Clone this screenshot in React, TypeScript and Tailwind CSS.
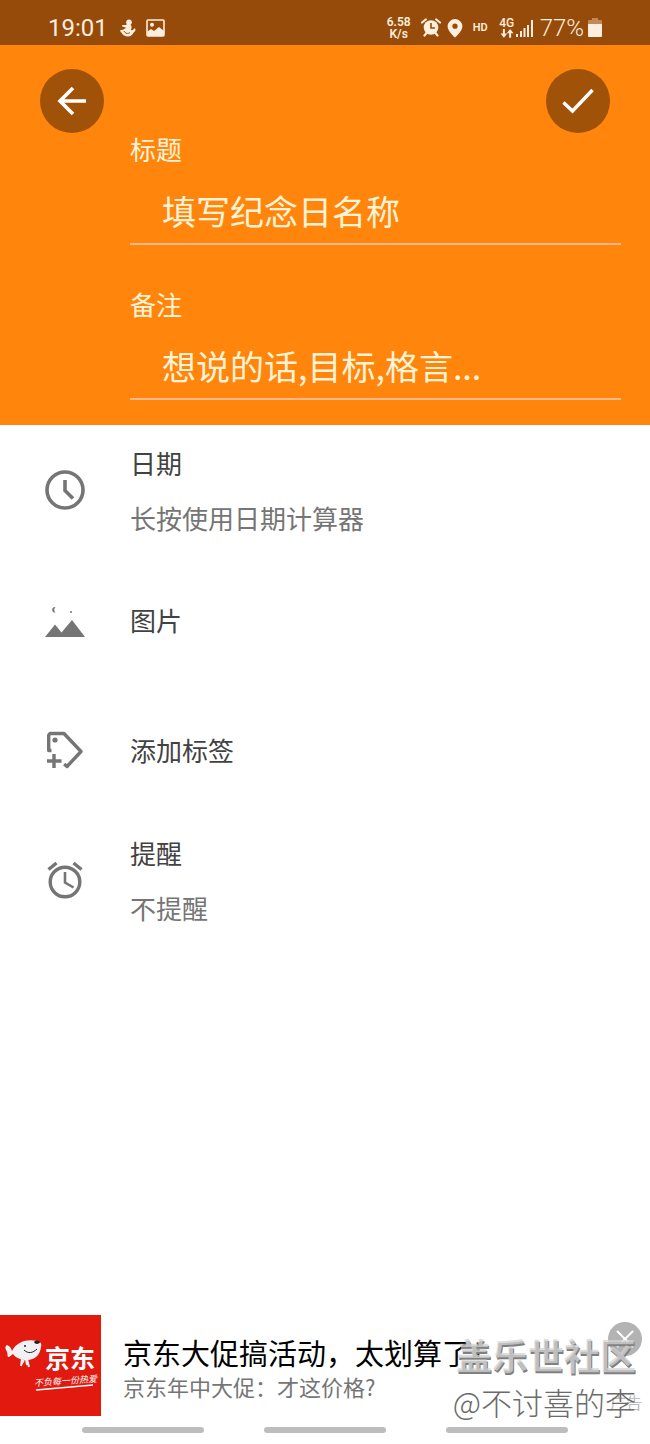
import type { ReactNode } from "react";

function BunnyIcon() {
  return (
    <svg viewBox="0 0 16 18" className="h-[18px] w-4 fill-[#fdeedd]">
      <circle cx="9" cy="3.2" r="2.800" />
      <path d="M7 5c3.500 0 5 1.500 4.500 4l-.6 2c1.400.4 2.100.1 2.800-1 .6-.9 2.100-.3 1.800.8-.4 1.600-1 2.200-1.800 2.800-1.400 2.600-3.200 4-5.700 4-3 0-5.300-1.300-6.600-4C.8 13 0 12.300.2 11.500c.3-.8 1.600-.2 2.600-.7C4 10.300 5.500 9.500 6 8.800L2.500 7.600c-.9-.5-.5-1.700.5-1.600L6 6z" />
      <path d="M4 12c1 2.500 4 3.200 6 1.500" fill="none" stroke="#964b0a" strokeWidth="1" />
    </svg>
  );
}

function PictureIcon() {
  return (
    <svg viewBox="0 0 20 18" className="h-[18px] w-5">
      <rect x="1" y="1" width="17" height="16" rx="1" fill="none" stroke="#fdeedd" strokeWidth="1.600" />
      <circle cx="6" cy="5.800" r="2" fill="#fdeedd" />
      <path d="M1.500 12.500 5 10l3 2 5-4 5 4v5H1.500z" fill="#fdeedd" />
    </svg>
  );
}

function StatusAlarmIcon() {
  return (
    <svg viewBox="0 0 20 19" className="h-[19px] w-5">
      <circle cx="10" cy="9.500" r="7.300" fill="#fdeedd" />
      <path d="M1 4.500 4.800 1.500M19 4.500 15.200 1.500M3.500 17.500l2-2.500M16.500 17.500l-2-2.500" stroke="#fdeedd" strokeWidth="2.200" strokeLinecap="round" />
      <path d="M10 5v5h4" fill="none" stroke="#964b0a" strokeWidth="1.600" />
    </svg>
  );
}

function PinIcon() {
  return (
    <svg viewBox="0 0 16 20" className="h-5 w-4">
      <path d="M8 1a7.400 7.400 0 0 0-7.400 7.400C.6 13 8 19.500 8 19.500S15.400 13 15.400 8.400A7.400 7.400 0 0 0 8 1zm0 4.600a2.600 2.600 0 1 1 0 5.200 2.600 2.600 0 0 1 0-5.200z" fill="#fdeedd" />
    </svg>
  );
}

function ArrowsIcon() {
  return (
    <svg viewBox="0 0 14 9" className="h-[9px] w-3.5 fill-[#fdeedd]">
      <path d="M2.900 0h2v4.500h2.400L3.900 8.800.5 4.500h2.400zM9.100 8.800h2V4.300h2.400L10.100 0 6.700 4.300h2.400z" />
    </svg>
  );
}

function SignalIcon() {
  return (
    <svg viewBox="0 0 18 18" className="size-[18px] fill-[#fdeedd]">
      <rect x="0" y="15" width="2" height="3" />
      <rect x="4" y="12" width="2" height="6" />
      <rect x="7.500" y="9" width="2" height="9" />
      <rect x="11" y="6" width="2" height="12" />
      <rect x="15" y="1" width="2" height="17" />
    </svg>
  );
}

function BatteryIcon() {
  return (
    <svg viewBox="0 0 14 19" className="h-[19px] w-3.5">
      <path d="M4 0h6v2h3a1 1 0 0 1 1 1v3H0V3a1 1 0 0 1 1-1h3z" fill="#c08a5a" />
      <path d="M0 6h14v12a1 1 0 0 1-1 1H1a1 1 0 0 1-1-1z" fill="#fdeedd" />
    </svg>
  );
}

function StatusBar() {
  return (
    <div className="flex h-[45px] items-center justify-between bg-[#964b0a] px-12 pt-2.5 font-[Roboto,sans-serif] text-[#fdeedd]">
      <div className="flex items-center gap-2.5">
        <span className="pr-0.5 text-2xl leading-6">19:01</span>
        <BunnyIcon />
        <PictureIcon />
      </div>
      <div className="flex items-center gap-1.5">
        <div className="pr-1 text-center text-xs leading-3 font-semibold">
          6.58
          <br />
          K/s
        </div>
        <StatusAlarmIcon />
        <PinIcon />
        <span className="px-1 text-[11px] leading-4 font-semibold">HD</span>
        <div className="flex items-center">
          <div className="flex w-[18px] flex-col items-center text-xs leading-[11px] font-medium">
            4G
            <ArrowsIcon />
          </div>
          <SignalIcon />
        </div>
        <div className="flex items-center gap-1">
          <span className="text-2xl leading-6 font-light">77%</span>
          <BatteryIcon />
        </div>
      </div>
    </div>
  );
}

function Field({ id, label, placeholder }: { id: string; label: string; placeholder: string }) {
  return (
    <div className="flex flex-col">
      <label htmlFor={id} className="text-[26px] leading-8 text-[#fff3d6]">
        {label}
      </label>
      <input
        id={id}
        placeholder={placeholder}
        className="h-20 w-full border-b-2 border-[#ffb98a] bg-transparent pt-3 pl-8 text-[34px] text-[#fff3d6] outline-none placeholder:text-[#fff3d6]"
      />
    </div>
  );
}

function ClockIcon() {
  return (
    <svg viewBox="0 0 40 40" className="size-10" fill="none" stroke="#757575" strokeWidth="3.600">
      <circle cx="20" cy="20" r="18" />
      <path d="M20 10v10.500l8 8" />
    </svg>
  );
}

function MountainIcon() {
  return (
    <svg viewBox="0 0 40 40" className="size-10 fill-[#757575]">
      <path d="M0 37 10 24.500l6.500 8L27 20l13 17z" />
      <path d="M10.500 7a2.800 2.800 0 1 0 0 5.500 4 4 0 0 1 0-5.500z" />
      <circle cx="26" cy="12" r="1" />
    </svg>
  );
}

function TagPlusIcon() {
  return (
    <svg viewBox="0 0 40 40" className="size-10" fill="none" stroke="#757575" strokeWidth="3.400">
      <path d="M6.500 20.500H3.700V5.500a2 2 0 0 1 2-2H19L36 21.500 22 36.500l-2.800-2.500" strokeLinejoin="round" />
      <circle cx="10" cy="10" r="2.600" fill="#757575" stroke="none" />
      <path d="M9 24v14M2 31h14.500" />
    </svg>
  );
}

function AlarmIcon() {
  return (
    <svg viewBox="0 0 40 40" className="size-10" fill="none" stroke="#757575" strokeWidth="3.400">
      <circle cx="20" cy="22" r="14.800" />
      <path d="M3.500 9.500 11.500 3M36.500 9.500 28.500 3" />
      <path d="M20 12v10.500l8.500 5" strokeWidth="2.600" />
    </svg>
  );
}

function Row({ icon, title, note }: { icon: ReactNode; title: string; note?: string }) {
  return (
    <button type="button" className="flex h-[130px] w-full items-center gap-[45px] pl-[45px] text-left">
      {icon}
      <span className="flex flex-col gap-[15px] text-[26px] leading-10">
        <span className="text-[#424242]">{title}</span>
        {note && <span className="text-[#757575]">{note}</span>}
      </span>
    </button>
  );
}

function AdLogo() {
  return (
    <div className="relative size-[101px] shrink-0 bg-[#e1190f] text-white">
      <svg viewBox="0 0 101 101" className="absolute inset-0 size-full">
        <path d="M12 36C17 26 28 24 37 26c4 1 5 3 4 6-1 8-6 13-14 13-6 0-11-2-14-6-2 1-3 3-5 3-1-3 0-4-2-7-1-2-1-4 1-5 3 1 4 3 5 6z" fill="#f1f1f3" />
        <path d="M34 27c2-2 5-1 6 0 0 2-5 3-6 0z" fill="#222" />
        <circle cx="25" cy="31" r="1" fill="#222" />
        <path d="M24 35c4 4 9 3 13-1" fill="none" stroke="#222" strokeWidth="1" />
        <path d="M22 44l-1 7M27 44l2 8M24 45l-3 5M26 44l1 6" stroke="#f1f1f3" strokeWidth="2" />
        <path d="M36 75l57-5" stroke="#fff" strokeWidth="1.400" />
      </svg>
      <div className="absolute top-7 right-1 left-[30px] flex flex-col items-end gap-1 whitespace-nowrap">
        <span className="px-0.5 text-[25px] leading-7 font-bold">京东</span>
        <span className="-rotate-4 text-[9px] leading-3 italic">不负每一份热爱</span>
      </div>
    </div>
  );
}

function AdBanner() {
  return (
    <div className="relative flex items-center gap-[22px]">
      <AdLogo />
      <div className="flex min-w-0 flex-col whitespace-nowrap">
        <span className="text-[29px] leading-10 text-black">京东大促搞活动，太划算了！</span>
        <span className="text-[22px] leading-7 text-[#757575]">京东年中大促：才这价格?</span>
      </div>
      <button
        type="button"
        aria-label="关闭"
        className="absolute top-[7px] right-2 flex size-[34px] items-center justify-center rounded-full bg-[#b3b3b3]"
      >
        <svg viewBox="0 0 18 18" className="size-[18px]" stroke="#fff" strokeWidth="2">
          <path d="M1 1l16 16M17 1 1 17" />
        </svg>
      </button>
      <span className="absolute right-2 bottom-1 text-base leading-5 text-[#bdbdbd]">广告</span>
      <div className="pointer-events-none absolute right-3.5 -bottom-2.5 flex flex-col items-end whitespace-nowrap">
        <span className="text-4xl leading-[48px] font-bold text-[#d4d4d4]/75 [text-shadow:1px_2px_0_#808080]">盖乐世社区</span>
        <span className="text-[31px] leading-[48px] font-light text-[#6b6b6b]">@不讨喜的李</span>
      </div>
    </div>
  );
}

export default function App() {
  return (
    <div className="flex min-h-screen flex-col bg-white font-['Noto_Sans_CJK_SC',sans-serif]">
      <StatusBar />
      <header className="bg-[#ff850d] pt-6 pb-[25px]">
        <div className="flex justify-between px-10">
          <button type="button" aria-label="返回" className="flex size-16 items-center justify-center rounded-full bg-[#a05208]">
            <svg viewBox="0 0 30 30" className="size-[30px]" fill="none" stroke="#fff" strokeWidth="3.600">
              <path d="M29 15H3M16 2 3 15l13 13" />
            </svg>
          </button>
          <button type="button" aria-label="保存" className="flex size-16 items-center justify-center rounded-full bg-[#a05208]">
            <svg viewBox="0 0 32 26" className="h-[26px] w-8" fill="none" stroke="#fff" strokeWidth="3.400">
              <path d="M1.500 14.500 10.500 23 30.500 2" />
            </svg>
          </button>
        </div>
        <div className="flex flex-col gap-[43px] pr-[29px] pl-[130px]">
          <Field id="title" label="标题" placeholder="填写纪念日名称" />
          <Field id="note" label="备注" placeholder="想说的话,目标,格言..." />
        </div>
      </header>
      <main className="flex-1">
        <Row icon={<ClockIcon />} title="日期" note="长按使用日期计算器" />
        <Row icon={<MountainIcon />} title="图片" />
        <Row icon={<TagPlusIcon />} title="添加标签" />
        <Row icon={<AlarmIcon />} title="提醒" note="不提醒" />
      </main>
      <AdBanner />
      <nav className="flex h-7 items-center justify-center gap-[60px]">
        <div className="h-1.5 w-[122px] rounded-full bg-[#bdbdbd]" />
        <div className="h-1.5 w-[122px] rounded-full bg-[#bdbdbd]" />
        <div className="h-1.5 w-[122px] rounded-full bg-[#bdbdbd]" />
      </nav>
    </div>
  );
}
